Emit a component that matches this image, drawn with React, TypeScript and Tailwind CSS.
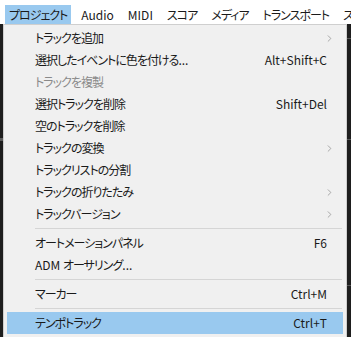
import { ChevronRight } from "lucide-react";

type Item =
    | { kind: "sep" }
    | { kind: "item"; label: string; shortcut?: string; sub?: boolean; disabled?: boolean; active?: boolean };

const topMenus = ["プロジェクト", "Audio", "MIDI", "スコア", "メディア", "トランスポート", "スタジオ"];

const items: Item[] = [
    { kind: "item", label: "トラックを追加", sub: true },
    { kind: "item", label: "選択したイベントに色を付ける...", shortcut: "Alt+Shift+C" },
    { kind: "item", label: "トラックを複製", disabled: true },
    { kind: "item", label: "選択トラックを削除", shortcut: "Shift+Del" },
    { kind: "item", label: "空のトラックを削除" },
    { kind: "item", label: "トラックの変換", sub: true },
    { kind: "item", label: "トラックリストの分割" },
    { kind: "item", label: "トラックの折りたたみ", sub: true },
    { kind: "item", label: "トラックバージョン", sub: true },
    { kind: "sep" },
    { kind: "item", label: "オートメーションパネル", shortcut: "F6" },
    { kind: "item", label: "ADM オーサリング..." },
    { kind: "sep" },
    { kind: "item", label: "マーカー", shortcut: "Ctrl+M" },
    { kind: "sep" },
    { kind: "item", label: "テンポトラック", shortcut: "Ctrl+T", active: true },
];

const isAscii = (s: string) => /^[\x00-\x7f]+$/.test(s);

// latin runs keep normal spacing, japanese runs get squeezed a bit
const Label = ({ text }: { text: string }) => {
    const parts = text.match(/[\x00-\x7f]+|[^\x00-\x7f]+/g) || [];
    return (
        <>
            {parts.map((p, i) => (
                <span key={i} className={isAscii(p) ? "" : "tracking-[-1px]"}>
                    {p}
                </span>
            ))}
        </>
    );
};

const App = () => {
    return (
        <div
            className="w-[351px] h-[337px] overflow-hidden flex flex-col bg-white text-[12px] text-[#1a1a1a] [font-feature-settings:'palt']"
            style={{ fontFamily: '"Noto Sans CJK JP", "Noto Sans", sans-serif' }}
        >
            {/* menubar */}
            <div className="h-[24px] shrink-0 flex items-end pl-[5px] bg-white whitespace-nowrap overflow-hidden">
                {topMenus.map((m, i) => (
                    <div
                        key={m}
                        className={
                            i === 0
                                ? "h-[19px] px-[4px] flex items-center bg-[#99c9ef] mr-[3px] shrink-0"
                                : "h-[19px] px-[7px] flex items-center shrink-0"
                        }
                    >
                        <Label text={m} />
                    </div>
                ))}
            </div>

            <div className="flex flex-1 min-h-0">
                <div className="w-[3px] bg-[#1e1e1e] flex flex-col">
                    <div className="h-[114px]" />
                    <div className="h-[3px] bg-[#5a5a5a]" />
                </div>

                {/* dropdown */}
                <div className="w-[344px] bg-[#f0f0f0] border-l border-t border-r border-[#cfcfcf] px-[3px] pt-[2px]">
                    {items.map((it, i) =>
                        it.kind === "sep" ? (
                            <div key={i} className="h-[7px] flex items-center pl-[28px] pr-[1px]">
                                <div className="h-px w-full bg-[#d5d5d5]" />
                            </div>
                        ) : (
                            <div
                                key={i}
                                className={
                                    "h-[22px] flex items-center pl-[28px] pr-[14px] " +
                                    (it.active ? "bg-[#99c9ef]" : "") +
                                    (it.disabled ? " text-[#8a8a8a]" : "")
                                }
                            >
                                <span className="flex-1 whitespace-nowrap">
                                    <Label text={it.label} />
                                </span>
                                {it.shortcut && <span className="whitespace-nowrap mr-[2px]">{it.shortcut}</span>}
                                {it.sub && <ChevronRight size={11} strokeWidth={1.5} className="text-[#888] -mr-[6px]" />}
                            </div>
                        )
                    )}
                </div>

                <div className="w-[4px] bg-[#1e1e1e] flex flex-col">
                    <div className="h-[14px]" />
                    <div className="h-px bg-[#555]" />
                    <div className="h-[100px]" />
                    <div className="h-px bg-[#555]" />
                    <div className="h-[145px]" />
                    <div className="h-px bg-[#555]" />
                </div>
            </div>
        </div>
    );
};

export default App;
